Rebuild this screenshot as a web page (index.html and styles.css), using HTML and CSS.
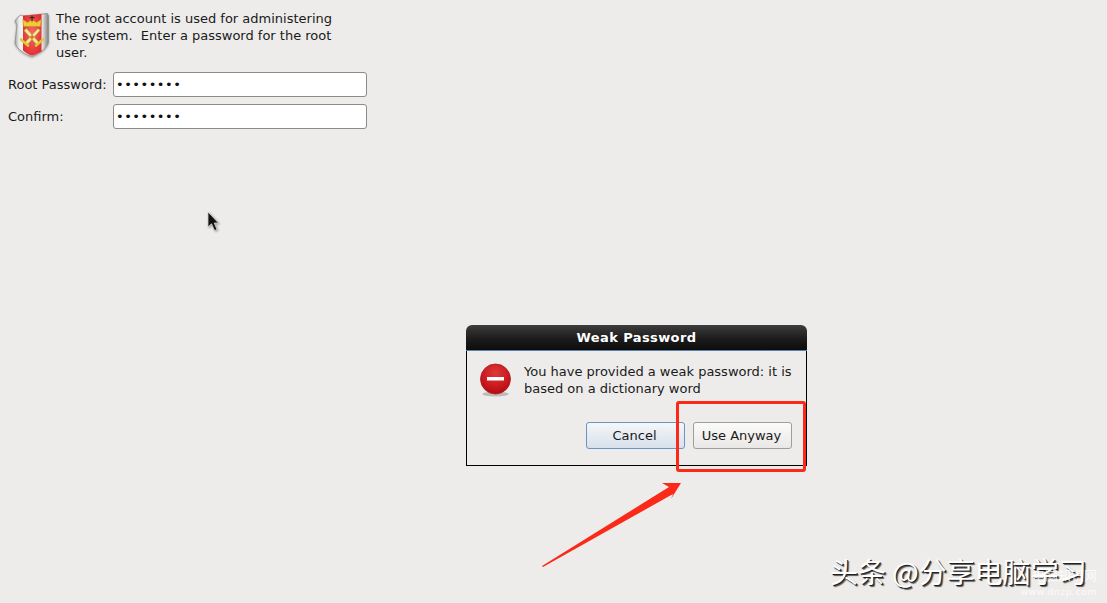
FILE: index.html
```html
<!DOCTYPE html>
<html lang="en">
<head>
<meta charset="utf-8">
<title>Root Password</title>
<link rel="stylesheet" href="styles.css">
</head>
<body>
<main class="page">
  <section class="intro">
    <svg class="shield" viewBox="0 0 36 46" width="36" height="46" aria-hidden="true">
      <defs>
        <linearGradient id="sg" x1="0" x2="1" y1="0" y2="0"><stop offset="0" stop-color="#a5a5a5"/><stop offset=".12" stop-color="#ececec"/><stop offset=".3" stop-color="#f8f6f6"/><stop offset=".82" stop-color="#e4e0e0"/><stop offset="1" stop-color="#7f7f7f"/></linearGradient>
        <radialGradient id="rg" cx=".5" cy=".45" r=".7"><stop offset="0" stop-color="#f76a66"/><stop offset="1" stop-color="#de2226"/></radialGradient>
      </defs>
      <path d="M4 5 L7 3 L9 4 L33.500 1.500 L34.500 4 L34.500 30 C33 37 26 41 18 44.500 C10 42 3 37 1 31 L3 13 L1 9 Z" fill="url(#sg)" stroke="#8d8d8d" stroke-width=".8"/>
      <path d="M9 3.800 L27.500 2 L27.500 39.500 C24 41.500 21 42.800 18 43.800 C15 42.800 12 41 9 38.500 Z" fill="url(#rg)"/>
      <path d="M9.500 14.500 L8.800 7.500 L13.500 10.500 L18 7.500 L22.500 10.500 L27.300 7.500 L26.500 14.500 Z" fill="#f1cc3a" stroke="#b08a1a" stroke-width=".5"/>
      <path d="M17.400 3.500 h1.300 v1.500 h1.800 v1.200 h-1.800 v3.300 h-1.300 v-3.300 h-1.800 v-1.200 h1.800 Z" fill="#4a2a10"/>
      <path d="M10.500 31 L13 33 L26 18.500 L24 16.500 Z M25.500 31 L23 33 L10 18.500 L12.500 16.500 Z" fill="#f4ec90" stroke="#b0a235" stroke-width=".7"/>
      <path d="M7 27.500 L14 33.500 M29 27.500 L22 33.500" stroke="#dfc835" stroke-width="2.600" stroke-linecap="round"/>
    </svg>
    <p class="intro-text">The root account is used for administering<br>the system.&nbsp; Enter a password for the root<br>user.</p>
  </section>
  <form class="fields">
    <label class="field-label" for="pw1">Root Password:</label>
    <input class="field-input" id="pw1" type="password" value="12345678">
    <label class="field-label" for="pw2">Confirm:</label>
    <input class="field-input" id="pw2" type="password" value="12345678">
  </form>
</main>

<svg class="cursor" viewBox="0 0 14 22" width="14" height="22" aria-hidden="true">
  <path d="M1 1 V16 L4.500 12.800 L7.500 19.500 L10 18.500 L7.200 12 L11.500 12 Z" fill="#111" stroke="#d8d8d8" stroke-width=".8"/>
</svg>

<div class="dialog" role="dialog">
  <h2 class="dialog-title">Weak Password</h2>
  <div class="dialog-body">
    <div class="dialog-message">
      <svg class="stop" viewBox="0 0 34 36" width="34" height="36" aria-hidden="true">
        <defs>
          <radialGradient id="dg" cx=".5" cy=".3" r=".75"><stop offset="0" stop-color="#dd3a3c"/><stop offset=".7" stop-color="#c5141a"/><stop offset="1" stop-color="#a50c10"/></radialGradient>
        </defs>
        <ellipse cx="16.500" cy="31" rx="13" ry="2.500" fill="#bdbcba"/>
        <circle cx="16.500" cy="16" r="15" fill="url(#dg)" stroke="#a81a1e" stroke-width=".8"/>
        <rect x="8" y="14" width="17" height="3.500" fill="#fff"/>
      </svg>
      <p class="dialog-text">You have provided a weak password: it is<br>based on a dictionary word</p>
    </div>
    <div class="dialog-actions">
      <button class="btn btn-default" type="button">Cancel</button>
      <button class="btn" type="button">Use Anyway</button>
    </div>
  </div>
</div>

<div class="highlight"></div>
<svg class="arrow" viewBox="0 0 150 105" width="150" height="105" aria-hidden="true">
  <path d="M1 96 L128 17 L121 13 L140 13 L130 29 L132 24 L2 97 Z" fill="#fb2a18"/>
</svg>

<div class="watermark">头条 @分享电脑学习</div>
<div class="watermark-faint"><span class="faint-cn">电脑知识网</span><span class="faint-url">www.dnzp.com</span></div>
</body>
</html>
```

FILE: styles.css
```css
* { box-sizing: border-box; }
html, body { height: 100%; }
body {
  margin: 0;
  position: relative;
  overflow: hidden;
  background: #edeceb;
  color: #1a1a1a;
  font-family: "DejaVu Sans", sans-serif;
  font-size: 13px;
  line-height: 17px;
}
.page { padding: 10px 0 0 8px; width: 367px; }
.intro { display: flex; align-items: flex-start; gap: 6px; padding-left: 6px; }
.shield { margin-top: 2px; flex: none; filter: drop-shadow(0 1px 1px rgba(0,0,0,.3)); }
.intro-text { margin: 0; white-space: nowrap; }
.fields {
  display: grid;
  grid-template-columns: 105px 254px;
  row-gap: 7px;
  margin-top: 11px;
  align-items: center;
}
.field-label { white-space: nowrap; }
.field-input {
  height: 25px;
  width: 254px;
  padding: 0 3px 0 2px;
  border: 1px solid #8d8b87;
  border-radius: 3px;
  background: #fff;
  color: #111;
  font-family: "DejaVu Sans", sans-serif;
  font-size: 13px;
  letter-spacing: .5px;
  outline: none;
}
.cursor { position: absolute; left: 207px; top: 211px; filter: blur(.3px) drop-shadow(1px 1px 1px rgba(0,0,0,.35)); }
.dialog {
  position: absolute;
  left: 466px;
  top: 325px;
  width: 341px;
  height: 141px;
  display: flex;
  flex-direction: column;
}
.dialog-title {
  margin: 0;
  height: 26px;
  border-radius: 6px 6px 0 0;
  background: linear-gradient(#3d3d3d, #1c1c1c 55%, #0c0c0c);
  border-bottom: 1px solid #5c7fa8;
  color: #fff;
  font-size: 13px;
  font-weight: bold;
  line-height: 26px;
  text-align: center;
  letter-spacing: .4px;
}
.dialog-body {
  flex: 1;
  border: 1px solid #000;
  border-top: 0;
  padding: 12px 14px 16px 12px;
  display: flex;
  flex-direction: column;
  justify-content: space-between;
}
.dialog-message { display: flex; gap: 11px; align-items: flex-start; }
.stop { flex: none; }
.dialog-text { margin: 0; white-space: nowrap; }
.dialog-actions { display: flex; justify-content: flex-end; gap: 8px; }
.btn {
  width: 99px;
  height: 27px;
  padding: 0 2px 1px 0;
  border: 1px solid #a09e9a;
  border-radius: 3px;
  background: linear-gradient(#fbfbfa, #e9e8e6);
  color: #1a1a1a;
  font-family: "DejaVu Sans", sans-serif;
  font-size: 13px;
}
.btn-default {
  border-color: #6d93bf;
  background: linear-gradient(#f4f6f9, #d8e1ec);
}
.highlight {
  position: absolute;
  left: 676px;
  top: 401px;
  width: 130px;
  height: 71px;
  border: 3px solid #fb2a18;
  border-radius: 3px;
}
.arrow { position: absolute; left: 541px; top: 470px; }
.watermark {
  position: absolute;
  left: 830px;
  top: 554px;
  color: #fff;
  font-family: "Noto Sans CJK SC", sans-serif;
  font-size: 28px;
  line-height: 34px;
  white-space: nowrap;
  text-shadow: 1px 1px 0 #222, 2px 2px 1px #555;
}
.watermark-faint {
  position: absolute;
  left: 1028px;
  top: 566px;
  display: flex;
  flex-direction: column;
  align-items: flex-end;
  width: 69px;
  color: rgba(255,255,255,.8);
  white-space: nowrap;
}
.faint-cn { font-family: "Noto Sans CJK SC", sans-serif; font-size: 13px; line-height: 18px; }
.faint-url { font-size: 9.500px; line-height: 12px; letter-spacing: .4px; margin-top: 2px; }
```
